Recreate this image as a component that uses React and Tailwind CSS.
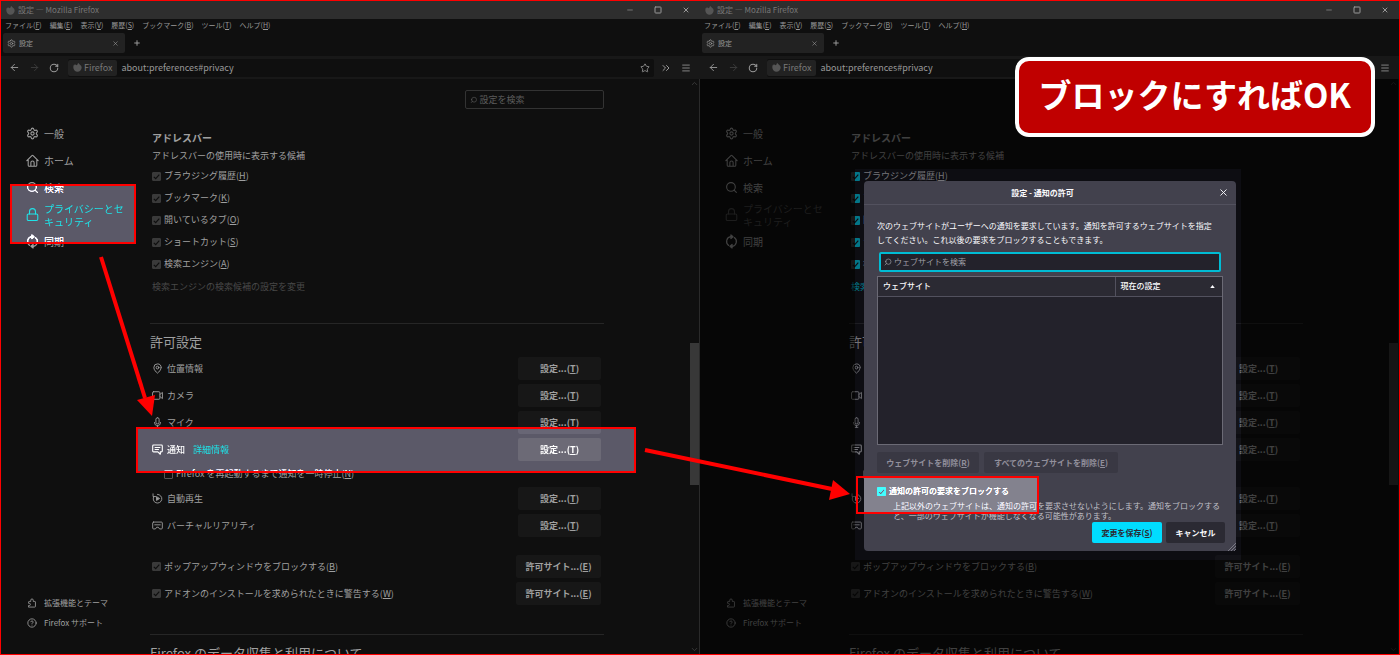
import React from 'react';
import { Settings, ArrowLeft, ArrowRight, RotateCw, Star, ChevronsRight, Menu, X, Plus, Minus, Square, Search, ChevronUp, ChevronDown, CircleQuestionMark, MapPin } from 'lucide-react';

const line = { fill: 'none', stroke: 'currentColor', strokeWidth: 1.3, strokeLinecap: 'round', strokeLinejoin: 'round', viewBox: '0 0 16 16', 'aria-hidden': true };

const HomeIcon = ({ className }) => (
  <svg {...line} className={className}>
    <path d="M1 8.200 7.300 1.900a1 1 0 0 1 1.400 0L15 8.200M2.700 7v6.700a1.300 1.300 0 0 0 1.300 1.300h8a1.300 1.300 0 0 0 1.300-1.300V7M6 14.800V10.500a2 2 0 0 1 4 0v4.300" />
  </svg>
);
const LockIcon = ({ className }) => (
  <svg {...line} className={className}>
    <rect x="1.500" y="7.500" width="13" height="7.800" rx="1.500" />
    <path d="M4.300 7.500V4.500a3.700 3.700 0 0 1 7.400 0v3" />
  </svg>
);
const SyncIcon = ({ className }) => (
  <svg {...line} strokeWidth={1.500} className={`overflow-visible ${className}`}>
    <path d="M4.500 12.900A6 6 0 0 1 7 2.100M11.500 3.100A6 6 0 0 1 9 13.900" />
    <path d="M7.300 0v4.400L9.900 2.200ZM8.700 11.600V16L6.100 13.800Z" fill="currentColor" />
  </svg>
);
const PuzzleIcon = ({ className }) => (
  <svg {...line} className={className}>
    <path d="M3 14.500h9.500a1 1 0 0 0 1-1V6.500a1 1 0 0 0-1-1H10V3.500a2 2 0 0 0-4 0v2H3.500a1 1 0 0 0-1 1V8.500h1.200a1.700 1.700 0 0 1 0 3.500H2.500v2" />
  </svg>
);
const CameraIcon = ({ className }) => (
  <svg {...line} className={className}>
    <rect x="0.800" y="2.500" width="10.700" height="11" rx="1.500" />
    <path d="m11.500 6.500 3.700-3v9l-3.700-3" />
  </svg>
);
const MicIcon = ({ className }) => (
  <svg {...line} className={className}>
    <rect x="5.700" y="1" width="4.600" height="9" rx="2.300" />
    <path d="M3.500 8a4.500 4.500 0 0 0 9 0M8 12.500V15M6 15h4" />
  </svg>
);
const NoticeIcon = ({ className }) => (
  <svg {...line} strokeWidth={1.600} className={className}>
    <path d="M2.300 1.500h11.400a1.300 1.300 0 0 1 1.300 1.300v7.400a1.300 1.300 0 0 1-1.300 1.300H12V15l-3.500-3.500H2.300A1.300 1.300 0 0 1 1 10.200V2.800a1.300 1.300 0 0 1 1.300-1.300ZM4.500 5h7M4.500 8h5" />
  </svg>
);
const AutoplayIcon = ({ className }) => (
  <svg {...line} className={className}>
    <path d="M8 2A6.300 6.300 0 1 1 2.600 5M1.500 1.200V5.200H5.500" />
    <path d="M6.600 5.800v5l4-2.500Z" fill="currentColor" />
  </svg>
);
const VrIcon = ({ className }) => (
  <svg {...line} className={className}>
    <path d="M2.300 3h11.400A1.300 1.300 0 0 1 15 4.300v7.400a1.300 1.300 0 0 1-1.300 1.300H11L9.200 10.500H6.800L5 13H2.300A1.300 1.300 0 0 1 1 11.700V4.300A1.300 1.300 0 0 1 2.300 3ZM4 7h8" />
  </svg>
);
const FirefoxIcon = ({ className }) => (
  <svg viewBox="0 0 16 16" className={className} aria-hidden="true">
    <path fill="currentColor" d="M14.800 5.600c-.4-1-1.200-1.900-1.900-2.300.4.8.6 1.500.6 2C12.500 3 10.900 2.200 9.700.2 8.300 1 7.800 2.400 7.700 3.500c-.8 0-1.500.3-2.100.7-.6-.5-.6-1.600-.4-2.200-1 .4-1.800 1.200-2.300 1.900-.4-.5-.4-2-.4-2.200C1.300 2.900.5 5.700.6 8a7.400 7.400 0 0 0 14.800 0c0-.8-.2-1.700-.6-2.400Z" />
  </svg>
);

const Key = ({ children }) => <>(<u className="underline-offset-1">{children}</u>)</>;

function Check({ id, label, hotkey, checked = true, tone = 'bg-[#3a3a3a] border-[#3a3a3a]', mark = 'text-[#0f0f0f]', className = '' }) {
  return (
    <label htmlFor={id} className={`flex items-center gap-[3px] ${className}`}>
      <span className="grid size-[9px] shrink-0 place-items-center">
        <input id={id} type="checkbox" defaultChecked={checked} className={`col-start-1 row-start-1 size-[9px] appearance-none rounded-[1px] border ${tone}`} />
        {checked && (
          <svg viewBox="0 0 9 9" className={`pointer-events-none col-start-1 row-start-1 size-[9px] ${mark}`} fill="none" stroke="currentColor" strokeWidth="1.2" aria-hidden="true">
            <path d="m1.800 4.800 1.900 1.900 3.600-4" />
          </svg>
        )}
      </span>
      <span className="whitespace-nowrap">{label}{hotkey && <Key>{hotkey}</Key>}</span>
    </label>
  );
}

const menus = [['ファイル', 'F'], ['編集', 'E'], ['表示', 'V'], ['履歴', 'S'], ['ブックマーク', 'B'], ['ツール', 'T'], ['ヘルプ', 'H']];
const bars = [['ブラウジング履歴', 'H'], ['ブックマーク', 'K'], ['開いているタブ', 'O'], ['ショートカット', 'S'], ['検索エンジン', 'A']];

function Chrome() {
  return (
    <header className="shrink-0 text-[#999]">
      <div className="flex h-[18px] items-center bg-[#2e2e2e] pl-[5px] text-[8px] text-[#777]">
        <FirefoxIcon className="mr-[3px] size-[9px] text-[#555]" />
        <span className="flex-1">設定 — Mozilla Firefox</span>
        <div className="flex gap-5 pr-[10px] text-[#999]">
          <button aria-label="最小化"><Minus className="size-2" /></button>
          <button aria-label="最大化"><Square className="size-2" strokeWidth={3} /></button>
          <button aria-label="閉じる"><X className="size-2" strokeWidth={3} /></button>
        </div>
      </div>
      <nav className="flex h-[13px] items-center gap-2 pl-1 text-[7px]">
        {menus.map(([t, k]) => <button key={t} className="whitespace-nowrap">{t}<Key>{k}</Key></button>)}
      </nav>
      <div className="flex h-6 items-center pb-[2px] pl-[2px]">
        <div className="flex h-5 w-[122px] items-center rounded-[2px] bg-[#222] pr-[6px] pl-1 text-[7px]">
          <Settings className="mr-[3px] size-[9px]" />
          <span className="flex-1">設定</span>
          <button aria-label="タブを閉じる"><X className="size-[7px]" /></button>
        </div>
        <button aria-label="新しいタブ" className="ml-2"><Plus className="size-2" strokeWidth={3} /></button>
      </div>
      <div className="flex h-[23px] items-center bg-[#181818] pr-2 pl-2">
        <button aria-label="戻る"><ArrowLeft className="size-[11px]" /></button>
        <button aria-label="進む" className="ml-[9px] text-[#3c3c3c]"><ArrowRight className="size-[11px]" /></button>
        <button aria-label="再読み込み" className="ml-[9px]"><RotateCw className="size-[10px]" strokeWidth={2.500} /></button>
        <div className="ml-[9px] flex h-[18px] flex-1 items-center rounded-[2px] bg-[#0f0f0f] pr-1 text-[9px]">
          <span className="flex h-4 items-center gap-[2px] rounded-[2px] bg-[#222] px-[5px] text-[#777]"><FirefoxIcon className="size-[9px] text-[#555]" />Firefox</span>
          <input aria-label="アドレス" defaultValue="about:preferences#privacy" className="ml-1 min-w-0 flex-1 bg-transparent" />
          <button aria-label="ブックマークに追加"><Star className="size-[10px]" /></button>
        </div>
        <button aria-label="その他のツール" className="ml-[6px]"><ChevronsRight className="size-3" /></button>
        <button aria-label="メニュー" className="mr-px ml-[9px]"><Menu className="size-[10px]" /></button>
      </div>
    </header>
  );
}

function SideItem({ icon: Icon, children, active }) {
  return (
    <a href="#general" className={`flex h-[27px] items-center gap-[5px] ${active || ''}`}>
      <Icon className="size-[13px] shrink-0" strokeWidth={2} />
      <span className="w-20 leading-[13px]">{children}</span>
    </a>
  );
}

function PermRow({ icon: Icon, label, children, lit }) {
  return (
    <div className={`flex h-[27px] items-center pr-[3px] pl-[2px] ${lit ? 'relative z-20 text-white' : ''}`}>
      <Icon className="mr-1 size-[11px] shrink-0" />
      <span className={lit ? 'font-medium' : ''}>{label}</span>
      {children}
      <button className={`ml-auto h-[23px] w-[83px] rounded-[2px] font-bold ${lit ? 'bg-[#6c6a76]' : 'bg-[#171717]'}`}>設定...<Key>T</Key></button>
    </div>
  );
}

function Preferences({ side, lit, overlay }) {
  const split = lit ? undefined : 'border-transparent bg-origin-border bg-[linear-gradient(to_right,#3a3a3a_44%,#00a5b8_44%)]';
  return (
    <main className="relative flex min-h-0 flex-1 overflow-hidden bg-[#0f0f0f] text-[9px] text-[#a0a0a0]">
      <nav className="flex w-[149px] shrink-0 flex-col justify-between pt-[41px] pb-[21px] pl-[25px] text-[10px]">
        <div>
          <SideItem icon={Settings}>一般</SideItem>
          <SideItem icon={HomeIcon}>ホーム</SideItem>
          <SideItem icon={Search}>検索</SideItem>
          <SideItem icon={LockIcon} active={lit ? 'relative z-20 text-[#1fe3e8]' : 'text-[#4a4a4a]'}>プライバシーとセキュリティ</SideItem>
          <SideItem icon={SyncIcon}>同期</SideItem>
        </div>
        <div className="text-[8px]">
          <a href="#addons" className="flex h-5 items-center gap-[7px] whitespace-nowrap pl-px"><PuzzleIcon className="size-[10px]" />拡張機能とテーマ</a>
          <a href="#support" className="flex h-5 items-center gap-[7px] whitespace-nowrap pl-px"><CircleQuestionMark className="size-[10px]" />Firefox サポート</a>
        </div>
      </nav>
      <section className="w-[454px] shrink-0 pt-[11px]">
        <div className="ml-auto flex h-[19px] w-[139px] items-center rounded-[2px] border border-[#333] pl-1 text-[#5c5c5c]">
          <Search className="mr-[2px] size-2 -scale-x-100" />
          <input aria-label="設定を検索" placeholder="設定を検索" className="w-full bg-transparent placeholder:text-[#5c5c5c]" />
        </div>
        <div className="pt-[18px] pl-[2px]">
          <h2 className="flex h-5 items-center text-[10px] font-bold">アドレスバー</h2>
          <p className="h-[18px] leading-[18px]">アドレスバーの使用時に表示する候補</p>
          {bars.map(([t, k]) => <Check key={t} id={`${side}-${k}`} label={t} hotkey={k} tone={split} className="h-[22px]" />)}
          <a href="#engines" className={`flex h-6 items-center ${lit ? 'text-[#484848]' : 'text-[#00a5b8]'}`}>検索エンジンの検索候補の設定を変更</a>
        </div>
        <hr className="mt-6 border-[#262626]" />
        <h2 className="h-[31px] pt-1 text-[13px] leading-[27px]">許可設定</h2>
        <PermRow icon={MapPin} label="位置情報" />
        <PermRow icon={CameraIcon} label="カメラ" />
        <PermRow icon={MicIcon} label="マイク" />
        <PermRow icon={NoticeIcon} label="通知" lit={lit}>
          <a href="#more" className={`ml-2 ${lit ? 'text-[#1fe3e8]' : 'text-[#00a5b8]'}`}>詳細情報</a>
        </PermRow>
        <Check id={`${side}-pause`} label="Firefox を再起動するまで通知を一時停止" hotkey="N" checked={false} tone="border-[#555]" className="h-[22px] pl-[14px]" />
        <PermRow icon={AutoplayIcon} label="自動再生" />
        <PermRow icon={VrIcon} label="バーチャルリアリティ" />
        <div className="pt-[14px]">
          {[['ポップアップウィンドウをブロックする', 'B'], ['アドオンのインストールを求められたときに警告する', 'W']].map(([t, k]) => (
            <div key={k} className="flex h-[27px] items-center justify-between pr-[3px] pl-[2px]">
              <Check id={`${side}-${k}`} label={t} hotkey={k} />
              <button className="h-[23px] w-[85px] rounded-[2px] bg-[#171717] font-bold">許可サイト...<Key>E</Key></button>
            </div>
          ))}
        </div>
        <hr className="mt-[27px] border-[#262626]" />
        <h2 className="pt-1 text-[13px] leading-[27px]">Firefox のデータ収集と利用について</h2>
      </section>
      <div className="ml-auto flex w-[10px] shrink-0 flex-col items-center border-r border-[#2a2a2a] text-[#444]">
        <ChevronUp className="size-[9px] shrink-0" />
        <div className="flex-[255]" />
        <div className="w-full flex-[141] bg-[#383838]" />
        <div className="flex-[160]" />
        <ChevronDown className="size-[9px] shrink-0" />
      </div>
      {overlay}
    </main>
  );
}

function Dialog() {
  return (
    <div role="dialog" aria-label="通知の許可" className="absolute top-[102px] left-[164px] z-10 w-[372px] rounded-[4px] bg-[#42414d] text-[8px] text-[#fbfbfe]">
      <div className="flex h-6 items-center border-b border-[#52515e] pr-[7px] pl-[7px] font-bold">
        <span className="flex-1 pr-1 text-center">設定 - 通知の許可</span>
        <button aria-label="閉じる"><X className="size-[11px]" /></button>
      </div>
      <div className="px-[13px] pt-[14px] pb-2">
        <p className="leading-[14px] whitespace-nowrap">次のウェブサイトがユーザーへの通知を要求しています。通知を許可するウェブサイトを指定<br />してください。これ以後の要求をブロックすることもできます。</p>
        <div className="mx-[2px] mt-[5px] flex h-5 items-center rounded-[2px] border-2 border-[#00bcd4] bg-[#23222b] pl-[3px] text-[#a0a0a8]">
          <Search className="mr-[2px] size-2 shrink-0 -scale-x-100" />
          <input aria-label="ウェブサイトを検索" placeholder="ウェブサイトを検索" className="w-full bg-transparent placeholder:text-[#a0a0a8]" />
        </div>
        <div className="mt-1 h-[169px] border border-[#6b6a75] bg-[#23222b]">
          <table className="w-full border-b border-[#52515e] bg-[#2b2a33]">
            <thead>
              <tr className="h-[19px] text-left">
                <th className="pl-[5px] font-medium">ウェブサイト</th>
                <th className="w-[107px] border-l border-[#52515e] px-[5px] font-medium">
                  <span className="flex items-center justify-between">現在の設定<svg viewBox="0 0 6 4" className="mr-[2px] h-[3px] w-[5px]" aria-hidden="true"><path d="M0 4 3 0l3 4Z" fill="currentColor" /></svg></span>
                </th>
              </tr>
            </thead>
          </table>
        </div>
        <div className="mt-[7px] flex gap-[5px] font-bold text-[#918f9b]">
          <button className="h-[21px] w-[102px] rounded-[2px] bg-[#393843]">ウェブサイトを削除<Key>R</Key></button>
          <button className="h-[21px] w-[134px] rounded-[2px] bg-[#393843]">すべてのウェブサイトを削除<Key>E</Key></button>
        </div>
        <Check id="block" label="通知の許可の要求をブロックする" tone="bg-[#00ddff] border-[#00ddff]" mark="text-[#2b2a33]" className="mt-[10px] h-4 font-medium" />
        <p className="-mr-1 mt-[2px] pl-4 leading-[10px] text-[#c0c0c8]">上記以外のウェブサイトは、通知の許可を要求させないようにします。通知をブロックすると、一部のウェブサイトが機能しなくなる可能性があります。</p>
        <div className="mt-px -mr-[2px] flex justify-end gap-1 font-bold">
          <button className="h-[21px] w-[70px] rounded-[2px] bg-[#00ddff] text-[#2b2a33]">変更を保存<Key>S</Key></button>
          <button className="h-[21px] w-[59px] rounded-[2px] bg-[#2b2a33]">キャンセル</button>
        </div>
      </div>
      <svg viewBox="0 0 8 8" className="absolute right-0 bottom-0 size-2 text-[#8a8994]" stroke="currentColor" strokeWidth=".8" aria-hidden="true"><path d="m0 8 8-8M3 8l5-5M6 8l2-2" /></svg>
    </div>
  );
}

export default function App() {
  return (
    <div lang="ja" className="relative grid h-screen grid-cols-2 overflow-hidden border border-[#f00] bg-[#0f0f0f] font-['Noto_Sans_CJK_JP','Noto_Sans',sans-serif]">
      <div className="flex min-h-0 min-w-0 flex-col">
        <Chrome />
        <Preferences
          side="left"
          lit
          overlay={
            <>
              <div className="absolute top-[105px] left-[9px] z-10 h-[60px] w-[126px] backdrop-brightness-[1.6]" />
              <div className="absolute top-[105px] left-[9px] z-10 h-[60px] w-[126px] bg-[#434150] mix-blend-plus-lighter" />
              <div className="absolute top-[105px] left-[9px] z-10 h-[60px] w-[126px] border-2 border-[#f00]" />
              <div className="absolute top-[348px] left-[135px] z-10 h-[46px] w-[500px] backdrop-brightness-[1.6]" />
              <div className="absolute top-[348px] left-[135px] z-10 h-[46px] w-[500px] bg-[#434150] mix-blend-plus-lighter" />
              <div className="absolute top-[348px] left-[135px] z-10 h-[46px] w-[500px] border-2 border-[#f00]" />
            </>
          }
        />
      </div>
      <div className="flex min-h-0 min-w-0 flex-col">
        <Chrome />
        <Preferences
          side="right"
          overlay={
            <>
              <div className="absolute top-[90px] left-[155px] h-[391px] w-[386px] bg-[#0a0a1c]/30 shadow-[0_0_0_1000px_rgba(0,0,0,0.6)]" />
              <Dialog />
              <div className="absolute top-[397px] left-[164px] z-20 h-[38px] w-[175px] bg-[#414141] mix-blend-plus-lighter" />
              <div className="absolute top-[397px] left-[156px] z-20 h-[38px] w-[183px] border-2 border-[#f00]" />
            </>
          }
        />
      </div>
      <svg className="pointer-events-none absolute top-0 left-0 z-30 h-[655px] w-[900px]" viewBox="1 1 900 655" fill="#f00" stroke="#f00" aria-hidden="true">
        <path d="M101 257 145 398" strokeWidth="4" />
        <path d="m137 400 18-5-3 21Z" stroke="none" />
        <path d="M645 450 832 489" strokeWidth="4" />
        <path d="m833 480 17 14-21 6Z" stroke="none" />
      </svg>
      <div className="absolute top-[56px] right-[24px] z-30 flex h-20 items-center rounded-[14px] border-4 border-white bg-[#c00000] px-5 pb-[6px] text-[33px] leading-none font-bold whitespace-nowrap text-white">
        ブロックにすればOK
      </div>
    </div>
  );
}
